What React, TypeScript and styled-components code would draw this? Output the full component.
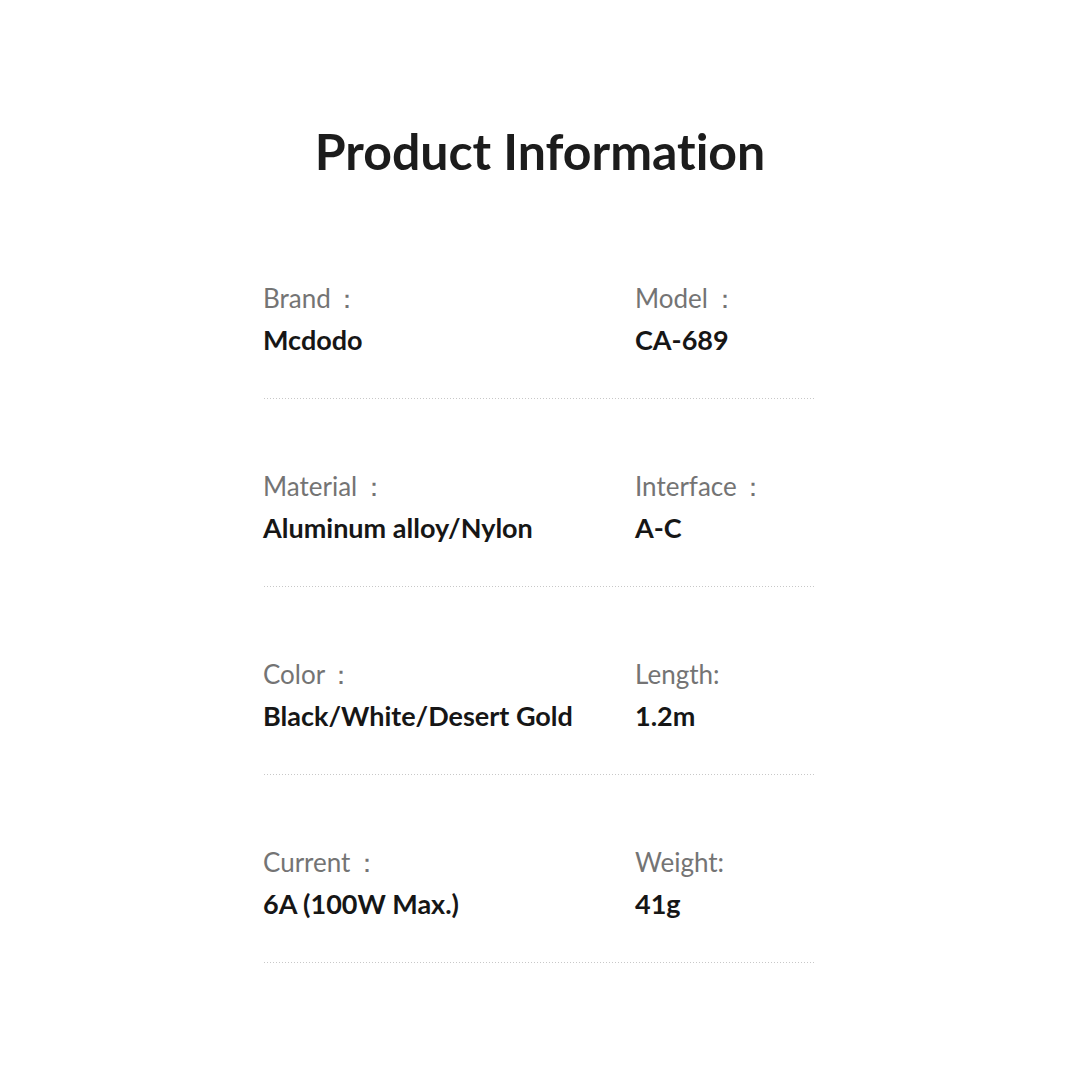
import React from "react";
import styled, { createGlobalStyle } from "styled-components";

const Global = createGlobalStyle`
  html, body { margin: 0; padding: 0; background: #ffffff; }
  body {
    font-family: Lato, "Noto Sans", sans-serif;
    font-variant-ligatures: none;
    -webkit-font-smoothing: antialiased;
  }
`;

const Page = styled.div`
  width: 1080px;
  height: 1080px;
  background: #ffffff;
  display: flex;
  flex-direction: column;
  align-items: center;
  box-sizing: border-box;
  padding-top: 116px;
`;

const Title = styled.h1`
  margin: 0;
  font-size: 50px;
  line-height: 70px;
  font-weight: 700;
  color: #1c1c1c;
  font-variant-ligatures: none;
`;

const Table = styled.div`
  margin-top: 96px;
  width: 552px;
  margin-left: -2px;
  display: flex;
  flex-direction: column;
`;

const Row = styled.div`
  display: grid;
  grid-template-columns: 372px 1fr;
  margin-bottom: 71px;
`;

const Divider = styled.div`
  grid-column: 1 / span 2;
  margin-top: 42px;
  margin-left: 1px;
  height: 1px;
  background-image: linear-gradient(to right, #c8c8c8 1px, transparent 1px);
  background-size: 3px 1px;
  background-repeat: repeat-x;
`;

const Cell = styled.div`
  display: flex;
  flex-direction: column;
`;

const Label = styled.div`
  font-size: 26px;
  line-height: 32px;
  color: #747474;
  font-weight: 400;
`;

const Colon = styled.span`
  margin-left: -3px;
`;

const Value = styled.div`
  margin-top: 10px;
  font-size: 27px;
  line-height: 32px;
  color: #161616;
  font-weight: 700;
`;

const rows: [string, boolean, string, string, boolean, string][] = [
  ["Brand", true, "Mcdodo", "Model", true, "CA-689"],
  ["Material", true, "Aluminum alloy/Nylon", "Interface", true, "A-C"],
  ["Color", true, "Black/White/Desert Gold", "Length", false, "1.2m"],
  ["Current", true, "6A (100W Max.)", "Weight", false, "41g"],
];

function LabelText({ text, wide }: { text: string; wide: boolean }) {
  return (
    <Label>
      {wide ? (
        <>
          {text} <Colon>：</Colon>
        </>
      ) : (
        <>{text}:</>
      )}
    </Label>
  );
}

export default function App() {
  return (
    <>
      <Global />
      <Page>
        <Title>Product Information</Title>
        <Table>
          {rows.map(([l1, w1, v1, l2, w2, v2]) => (
            <Row key={l1}>
              <Cell>
                <LabelText text={l1} wide={w1} />
                <Value>{v1}</Value>
              </Cell>
              <Cell>
                <LabelText text={l2} wide={w2} />
                <Value>{v2}</Value>
              </Cell>
              <Divider />
            </Row>
          ))}
        </Table>
      </Page>
    </>
  );
}
